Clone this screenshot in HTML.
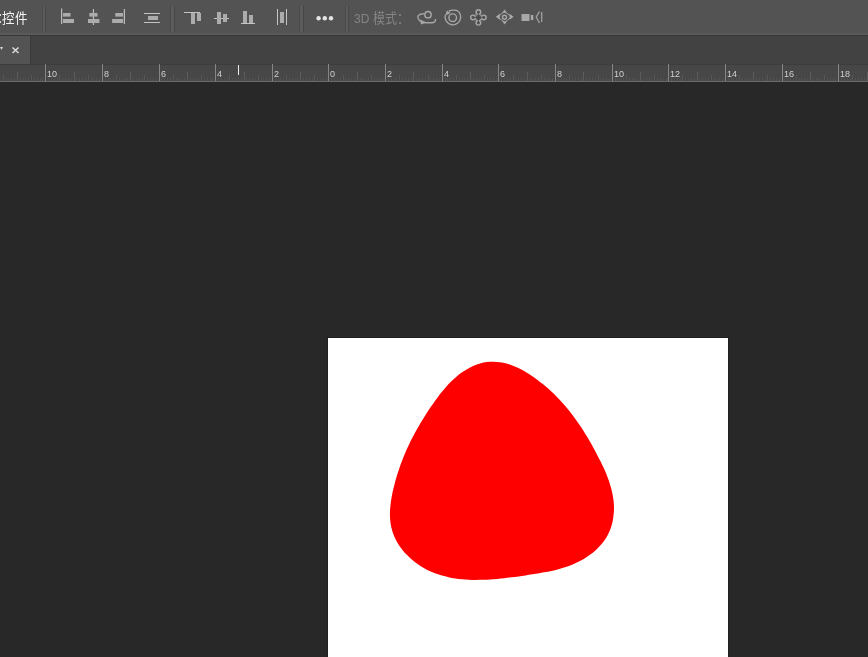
<!DOCTYPE html>
<html lang="zh-CN"><head><meta charset="utf-8">
<style>
html,body{margin:0;padding:0;}
body{width:868px;height:657px;overflow:hidden;background:#282828;position:relative;font-family:"Liberation Sans",sans-serif;}
.abs{position:absolute;}
#opt{left:0;top:0;width:868px;height:33px;background:#535353;}
#optl1{left:0;top:33px;width:868px;height:2px;background:#5a5a5a;}
#optl2{left:0;top:35px;width:868px;height:1px;background:#383838;}
#tabbar{left:0;top:36px;width:868px;height:28px;background:#424242;}
#tab{left:0;top:36px;width:30px;height:28px;background:#535353;}
#tabb{left:30px;top:36px;width:1px;height:28px;background:#3a3a3a;}
#ruler{left:0;top:64px;width:868px;height:17px;background:#474747;border-top:1px solid #3c3c3c;box-sizing:border-box;}
#rulerl{left:0;top:81px;width:868px;height:1px;background:#6a6a6a;}
#canvas{left:328px;top:338px;width:400px;height:330px;background:#fff;box-shadow:0 0 0 1px #202020;}
.t{position:absolute;white-space:nowrap;will-change:transform;}
</style></head>
<body>
<div class="abs" id="opt"></div>
<div class="abs" id="optl1"></div>
<div class="abs" id="optl2"></div>
<div class="abs" id="tabbar"></div>
<div class="abs" id="tab"></div>
<div class="abs" id="tabb"></div>
<div class="abs" id="ruler"></div>
<div class="abs" id="rulerl"></div>
<div class="abs" id="canvas"></div>

<!-- toolbar text -->
<div class="t" style="left:2px;top:10px;font-size:12.5px;color:#f4f4f4;line-height:16px;letter-spacing:-0.3px;font-weight:normal;transform:scale(1,1.1);transform-origin:0 0;">控件</div><div class="abs" style="left:0;top:14px;width:1px;height:2px;background:#d8d8d8"></div><div class="abs" style="left:0;top:21px;width:1px;height:2px;background:#d8d8d8"></div>
<div class="t" style="left:354px;top:9.5px;font-size:12px;color:#858585;line-height:16px;transform:scale(1,1.1);transform-origin:0 0;">3D 模式：</div>

<svg class="abs" style="left:0;top:0" width="868" height="657" viewBox="0 0 868 657">
  <!-- separators -->
  <g>
    <rect x="42" y="6" width="1" height="26" fill="#4a4a4a"/><rect x="43" y="6" width="2" height="26" fill="#5b5b5b"/><rect x="45" y="6" width="1" height="26" fill="#464646"/>
    <rect x="170" y="6" width="1" height="26" fill="#4a4a4a"/><rect x="171" y="6" width="3" height="26" fill="#5b5b5b"/><rect x="174" y="6" width="1" height="26" fill="#464646"/>
    <rect x="299" y="6" width="1" height="26" fill="#4a4a4a"/><rect x="300" y="6" width="3" height="26" fill="#5b5b5b"/><rect x="303" y="6" width="1" height="26" fill="#464646"/>
    <rect x="345" y="6" width="1" height="26" fill="#4a4a4a"/><rect x="346" y="6" width="2" height="26" fill="#5b5b5b"/><rect x="348" y="6" width="1" height="26" fill="#464646"/>
  </g>
  <g fill="#acacac">
    <!-- align left -->
    <rect x="61" y="8.5" width="1.2" height="15.5" fill="#bcbcbc"/>
    <rect x="63" y="13" width="7.5" height="3.6"/><rect x="63" y="19" width="11" height="4"/>
    <!-- align h center -->
    <rect x="92.8" y="9" width="1.2" height="16" fill="#bcbcbc"/>
    <rect x="89.3" y="13" width="8.2" height="3.6"/><rect x="88" y="19" width="11.4" height="4"/>
    <!-- align right -->
    <rect x="123.8" y="9" width="1.2" height="15" fill="#bcbcbc"/>
    <rect x="115.3" y="13" width="7.7" height="3.6"/><rect x="112.1" y="19" width="10.9" height="4"/>
    <!-- distribute -->
    <rect x="144" y="13" width="16" height="1" fill="#c4c4c4"/>
    <rect x="148" y="16" width="10" height="4"/>
    <rect x="144" y="22" width="16" height="1" fill="#c4c4c4"/>
    <!-- align top -->
    <rect x="184" y="12" width="16" height="1" fill="#c4c4c4"/>
    <rect x="191" y="13" width="4" height="11"/><rect x="197" y="13" width="4" height="8"/>
    <!-- align v center -->
    <rect x="214" y="18" width="15" height="1" fill="#c4c4c4"/>
    <rect x="217" y="12" width="4" height="12"/><rect x="223" y="14" width="4" height="8"/>
    <!-- align bottom -->
    <rect x="241" y="23" width="14" height="1" fill="#c4c4c4"/>
    <rect x="243" y="11" width="4" height="12"/><rect x="249" y="15" width="4" height="8"/>
    <!-- distribute h -->
    <rect x="277" y="9" width="1" height="16" fill="#c4c4c4"/>
    <rect x="280" y="12" width="4" height="11"/>
    <rect x="286" y="9" width="1" height="16" fill="#c4c4c4"/>
  </g>
  <!-- dots -->
  <g fill="#e4e4e4">
    <circle cx="318.6" cy="18.2" r="2.2"/><circle cx="324.8" cy="18.2" r="2.2"/><circle cx="331" cy="18.2" r="2.2"/>
  </g>
  <!-- 3D icons -->
  <g fill="none" stroke="#a6a6a6" stroke-width="1.4">
    <circle cx="428" cy="14.7" r="3.2"/>
    <path d="M424.5 13.6 L420.5 14.2 Q417 15.5 418.2 18.5 Q420 22.6 426 22.8 L431.5 22.8 Q436 22.5 435.5 19"/>
    <circle cx="452.7" cy="17.7" r="3.8"/>
    <path d="M449 11 Q452.7 9.5 457 10.5 Q461 12.8 460.6 17.7 A7.8 7.8 0 1 1 445.3 15"/>
    <circle cx="478.4" cy="12" r="2.3"/><circle cx="478.4" cy="22.8" r="2.3"/><circle cx="473" cy="17.4" r="2.3"/><circle cx="483.8" cy="17.4" r="2.3"/>
    <path d="M476 14.6 L476 15 L475.6 15 M480.8 14.6 L480.8 15 L481.2 15 M476 20.2 L476 19.8 L475.6 19.8 M480.8 20.2 L480.8 19.8 L481.2 19.8" />
    <path d="M478.4 12 L478.4 22.8 M473 17.4 L483.8 17.4" stroke="#474747" stroke-width="0.9"/>
    <path d="M504.6 11.5 L511.5 16.8 L504.6 22.5 L497.6 16.8 Z" stroke-width="1"/>
    <circle cx="504.5" cy="17.2" r="2"/>
    <path d="M539.5 11.5 L536.2 17 L539.5 23 M541.7 12 L541.7 22" stroke-width="1.2"/>
  </g>
  <g fill="#a8a8a8">
    <path d="M420 19.5 L426.5 22.5 L421 24.5 Z"/>
    <path d="M445 15.8 L447 10.5 L450.5 13 Z"/>
    <path d="M504.6 9.5 L507 12.8 L502.2 12.8 Z"/>
    <path d="M504.6 24.5 L507 21.2 L502.2 21.2 Z"/>
    <path d="M495.8 16.8 L499.8 13.8 L499.8 19.8 Z"/>
    <path d="M513.6 16.8 L509.6 13.8 L509.6 19.8 Z"/>
    <rect x="521.5" y="14" width="8" height="7"/>
    <rect x="530.8" y="15" width="2.5" height="5"/>
  </g>
  <!-- tab close -->
  <path d="M12.5 47.5 L18.5 53 M18.5 47.5 L12.5 53" stroke="#d8d8d8" stroke-width="1.6"/>
  <path d="M0 47 L3 47 L1.5 50 Z" fill="#d8d8d8"/>

  <!-- blob -->
  <path fill="#ff0000" d="M486.7 362.1 C488.9 361.8 491.1 361.7 493.3 361.7 C495.5 361.7 497.7 361.9 499.9 362.3 C502.1 362.6 504.3 363.1 506.5 363.6 C508.6 364.2 510.8 365.0 512.9 365.8 C515.1 366.6 517.2 367.6 519.3 368.6 C521.4 369.6 523.5 370.7 525.6 371.9 C527.6 373.1 529.6 374.4 531.6 375.7 C533.6 377.0 535.6 378.4 537.5 379.9 C539.4 381.3 541.3 382.8 543.1 384.3 C544.9 385.8 546.7 387.3 548.5 388.8 C550.2 390.4 551.9 392.0 553.6 393.6 C555.2 395.2 556.8 396.8 558.4 398.4 C560.0 400.1 561.5 401.8 563.0 403.5 C564.5 405.2 566.0 406.9 567.5 408.7 C568.9 410.4 570.3 412.2 571.7 414.0 C573.1 415.8 574.4 417.6 575.7 419.5 C577.1 421.3 578.3 423.2 579.6 425.0 C580.9 426.9 582.1 428.8 583.4 430.8 C584.6 432.7 585.8 434.7 587.0 436.6 C588.2 438.6 589.3 440.6 590.5 442.6 C591.6 444.6 592.8 446.7 593.9 448.7 C595.0 450.8 596.1 452.8 597.2 454.9 C598.3 457.0 599.4 459.1 600.5 461.2 C601.5 463.3 602.6 465.5 603.5 467.6 C604.5 469.8 605.5 472.0 606.4 474.2 C607.2 476.3 608.1 478.5 608.9 480.7 C609.6 483.0 610.3 485.2 610.9 487.4 C611.6 489.6 612.1 491.9 612.5 494.1 C613.0 496.4 613.3 498.7 613.6 500.9 C613.8 503.2 614.0 505.5 614.0 507.8 C614.0 510.1 613.9 512.4 613.6 514.6 C613.4 516.9 613.1 519.2 612.6 521.4 C612.1 523.6 611.5 525.8 610.8 528.0 C610.0 530.1 609.1 532.2 608.1 534.2 C607.1 536.2 606.0 538.2 604.7 540.0 C603.4 541.9 602.0 543.6 600.5 545.3 C599.0 547.0 597.4 548.7 595.7 550.2 C594.0 551.7 592.2 553.2 590.3 554.6 C588.5 555.9 586.5 557.2 584.5 558.4 C582.5 559.7 580.5 560.8 578.4 561.8 C576.3 562.9 574.2 563.8 572.1 564.7 C570.0 565.6 567.8 566.4 565.7 567.1 C563.5 567.9 561.3 568.5 559.2 569.1 C557.0 569.7 554.8 570.3 552.6 570.8 C550.4 571.2 548.2 571.7 545.9 572.1 C543.7 572.5 541.5 572.9 539.2 573.3 C536.9 573.6 534.7 574.0 532.4 574.3 C530.1 574.7 527.8 575.0 525.5 575.4 C523.1 575.7 520.8 576.1 518.5 576.4 C516.1 576.7 513.8 577.0 511.4 577.3 C509.0 577.6 506.7 577.9 504.3 578.2 C501.9 578.4 499.6 578.7 497.2 578.9 C494.8 579.1 492.4 579.3 490.1 579.5 C487.7 579.6 485.3 579.7 483.0 579.8 C480.6 579.9 478.2 579.9 475.9 579.9 C473.6 579.9 471.2 579.8 468.9 579.7 C466.6 579.6 464.3 579.5 462.0 579.2 C459.7 579.0 457.4 578.8 455.2 578.4 C452.9 578.1 450.7 577.7 448.5 577.2 C446.3 576.7 444.1 576.2 441.9 575.6 C439.8 574.9 437.7 574.2 435.6 573.5 C433.5 572.7 431.4 571.8 429.4 570.9 C427.3 569.9 425.3 568.9 423.4 567.7 C421.4 566.6 419.5 565.4 417.6 564.0 C415.7 562.7 413.9 561.3 412.1 559.8 C410.4 558.3 408.7 556.8 407.1 555.1 C405.4 553.5 403.9 551.7 402.5 549.9 C401.0 548.1 399.7 546.3 398.5 544.4 C397.3 542.4 396.1 540.4 395.2 538.4 C394.2 536.4 393.3 534.3 392.6 532.1 C391.9 530.0 391.4 527.8 390.9 525.6 C390.5 523.4 390.3 521.1 390.1 518.8 C389.9 516.6 389.9 514.3 390.0 511.9 C390.0 509.6 390.2 507.3 390.5 504.9 C390.7 502.6 391.1 500.2 391.5 497.9 C391.9 495.5 392.4 493.2 392.9 490.8 C393.4 488.5 394.0 486.2 394.6 483.9 C395.2 481.6 395.8 479.4 396.5 477.1 C397.1 474.9 397.8 472.7 398.6 470.5 C399.3 468.3 400.1 466.1 400.8 463.9 C401.6 461.7 402.5 459.6 403.3 457.5 C404.2 455.3 405.1 453.2 406.0 451.1 C406.9 449.0 407.8 447.0 408.8 444.9 C409.8 442.8 410.8 440.8 411.8 438.8 C412.9 436.7 413.9 434.7 415.0 432.7 C416.1 430.7 417.2 428.7 418.4 426.7 C419.5 424.7 420.7 422.8 421.9 420.8 C423.1 418.8 424.3 416.9 425.5 414.9 C426.8 413.0 428.0 411.1 429.3 409.1 C430.6 407.2 431.9 405.3 433.3 403.4 C434.6 401.5 436.0 399.5 437.4 397.7 C438.8 395.8 440.2 393.9 441.7 392.1 C443.2 390.3 444.7 388.5 446.2 386.7 C447.8 385.0 449.4 383.3 451.1 381.6 C452.7 380.0 454.4 378.4 456.2 376.9 C457.9 375.4 459.8 374.0 461.7 372.6 C463.6 371.3 465.5 370.0 467.5 368.9 C469.5 367.8 471.6 366.7 473.7 365.8 C475.8 364.9 478.0 364.1 480.1 363.5 C482.3 362.9 484.5 362.4 486.7 362.1Z"/>

  <!-- ruler -->
  <g id="rt"><rect x="3" y="75" width="1" height="6" fill="#565656"/><rect x="6" y="78" width="1" height="3" fill="#525252"/><rect x="8" y="78" width="1" height="3" fill="#525252"/><rect x="11" y="78" width="1" height="3" fill="#525252"/><rect x="14" y="78" width="1" height="3" fill="#525252"/><rect x="17" y="72" width="1" height="9" fill="#5c5c5c"/><rect x="20" y="78" width="1" height="3" fill="#525252"/><rect x="23" y="78" width="1" height="3" fill="#525252"/><rect x="25" y="78" width="1" height="3" fill="#525252"/><rect x="28" y="78" width="1" height="3" fill="#525252"/><rect x="31" y="75" width="1" height="6" fill="#565656"/><rect x="34" y="78" width="1" height="3" fill="#525252"/><rect x="37" y="78" width="1" height="3" fill="#525252"/><rect x="40" y="78" width="1" height="3" fill="#525252"/><rect x="42" y="78" width="1" height="3" fill="#525252"/><rect x="45" y="64" width="1" height="17" fill="#858585"/><rect x="48" y="78" width="1" height="3" fill="#525252"/><rect x="51" y="78" width="1" height="3" fill="#525252"/><rect x="54" y="78" width="1" height="3" fill="#525252"/><rect x="57" y="78" width="1" height="3" fill="#525252"/><rect x="59" y="75" width="1" height="6" fill="#565656"/><rect x="62" y="78" width="1" height="3" fill="#525252"/><rect x="65" y="78" width="1" height="3" fill="#525252"/><rect x="68" y="78" width="1" height="3" fill="#525252"/><rect x="71" y="78" width="1" height="3" fill="#525252"/><rect x="74" y="72" width="1" height="9" fill="#5c5c5c"/><rect x="76" y="78" width="1" height="3" fill="#525252"/><rect x="79" y="78" width="1" height="3" fill="#525252"/><rect x="82" y="78" width="1" height="3" fill="#525252"/><rect x="85" y="78" width="1" height="3" fill="#525252"/><rect x="88" y="75" width="1" height="6" fill="#565656"/><rect x="91" y="78" width="1" height="3" fill="#525252"/><rect x="93" y="78" width="1" height="3" fill="#525252"/><rect x="96" y="78" width="1" height="3" fill="#525252"/><rect x="99" y="78" width="1" height="3" fill="#525252"/><rect x="102" y="64" width="1" height="17" fill="#858585"/><rect x="105" y="78" width="1" height="3" fill="#525252"/><rect x="108" y="78" width="1" height="3" fill="#525252"/><rect x="110" y="78" width="1" height="3" fill="#525252"/><rect x="113" y="78" width="1" height="3" fill="#525252"/><rect x="116" y="75" width="1" height="6" fill="#565656"/><rect x="119" y="78" width="1" height="3" fill="#525252"/><rect x="122" y="78" width="1" height="3" fill="#525252"/><rect x="125" y="78" width="1" height="3" fill="#525252"/><rect x="127" y="78" width="1" height="3" fill="#525252"/><rect x="130" y="72" width="1" height="9" fill="#5c5c5c"/><rect x="133" y="78" width="1" height="3" fill="#525252"/><rect x="136" y="78" width="1" height="3" fill="#525252"/><rect x="139" y="78" width="1" height="3" fill="#525252"/><rect x="142" y="78" width="1" height="3" fill="#525252"/><rect x="144" y="75" width="1" height="6" fill="#565656"/><rect x="147" y="78" width="1" height="3" fill="#525252"/><rect x="150" y="78" width="1" height="3" fill="#525252"/><rect x="153" y="78" width="1" height="3" fill="#525252"/><rect x="156" y="78" width="1" height="3" fill="#525252"/><rect x="159" y="64" width="1" height="17" fill="#858585"/><rect x="161" y="78" width="1" height="3" fill="#525252"/><rect x="164" y="78" width="1" height="3" fill="#525252"/><rect x="167" y="78" width="1" height="3" fill="#525252"/><rect x="170" y="78" width="1" height="3" fill="#525252"/><rect x="173" y="75" width="1" height="6" fill="#565656"/><rect x="176" y="78" width="1" height="3" fill="#525252"/><rect x="178" y="78" width="1" height="3" fill="#525252"/><rect x="181" y="78" width="1" height="3" fill="#525252"/><rect x="184" y="78" width="1" height="3" fill="#525252"/><rect x="187" y="72" width="1" height="9" fill="#5c5c5c"/><rect x="190" y="78" width="1" height="3" fill="#525252"/><rect x="193" y="78" width="1" height="3" fill="#525252"/><rect x="195" y="78" width="1" height="3" fill="#525252"/><rect x="198" y="78" width="1" height="3" fill="#525252"/><rect x="201" y="75" width="1" height="6" fill="#565656"/><rect x="204" y="78" width="1" height="3" fill="#525252"/><rect x="207" y="78" width="1" height="3" fill="#525252"/><rect x="210" y="78" width="1" height="3" fill="#525252"/><rect x="212" y="78" width="1" height="3" fill="#525252"/><rect x="215" y="64" width="1" height="17" fill="#858585"/><rect x="218" y="78" width="1" height="3" fill="#525252"/><rect x="221" y="78" width="1" height="3" fill="#525252"/><rect x="224" y="78" width="1" height="3" fill="#525252"/><rect x="227" y="78" width="1" height="3" fill="#525252"/><rect x="229" y="75" width="1" height="6" fill="#565656"/><rect x="232" y="78" width="1" height="3" fill="#525252"/><rect x="235" y="78" width="1" height="3" fill="#525252"/><rect x="238" y="78" width="1" height="3" fill="#525252"/><rect x="241" y="78" width="1" height="3" fill="#525252"/><rect x="244" y="72" width="1" height="9" fill="#5c5c5c"/><rect x="246" y="78" width="1" height="3" fill="#525252"/><rect x="249" y="78" width="1" height="3" fill="#525252"/><rect x="252" y="78" width="1" height="3" fill="#525252"/><rect x="255" y="78" width="1" height="3" fill="#525252"/><rect x="258" y="75" width="1" height="6" fill="#565656"/><rect x="261" y="78" width="1" height="3" fill="#525252"/><rect x="263" y="78" width="1" height="3" fill="#525252"/><rect x="266" y="78" width="1" height="3" fill="#525252"/><rect x="269" y="78" width="1" height="3" fill="#525252"/><rect x="272" y="64" width="1" height="17" fill="#858585"/><rect x="275" y="78" width="1" height="3" fill="#525252"/><rect x="278" y="78" width="1" height="3" fill="#525252"/><rect x="280" y="78" width="1" height="3" fill="#525252"/><rect x="283" y="78" width="1" height="3" fill="#525252"/><rect x="286" y="75" width="1" height="6" fill="#565656"/><rect x="289" y="78" width="1" height="3" fill="#525252"/><rect x="292" y="78" width="1" height="3" fill="#525252"/><rect x="295" y="78" width="1" height="3" fill="#525252"/><rect x="297" y="78" width="1" height="3" fill="#525252"/><rect x="300" y="72" width="1" height="9" fill="#5c5c5c"/><rect x="303" y="78" width="1" height="3" fill="#525252"/><rect x="306" y="78" width="1" height="3" fill="#525252"/><rect x="309" y="78" width="1" height="3" fill="#525252"/><rect x="312" y="78" width="1" height="3" fill="#525252"/><rect x="314" y="75" width="1" height="6" fill="#565656"/><rect x="317" y="78" width="1" height="3" fill="#525252"/><rect x="320" y="78" width="1" height="3" fill="#525252"/><rect x="323" y="78" width="1" height="3" fill="#525252"/><rect x="326" y="78" width="1" height="3" fill="#525252"/><rect x="328" y="64" width="1" height="17" fill="#858585"/><rect x="331" y="78" width="1" height="3" fill="#525252"/><rect x="334" y="78" width="1" height="3" fill="#525252"/><rect x="337" y="78" width="1" height="3" fill="#525252"/><rect x="340" y="78" width="1" height="3" fill="#525252"/><rect x="343" y="75" width="1" height="6" fill="#565656"/><rect x="345" y="78" width="1" height="3" fill="#525252"/><rect x="348" y="78" width="1" height="3" fill="#525252"/><rect x="351" y="78" width="1" height="3" fill="#525252"/><rect x="354" y="78" width="1" height="3" fill="#525252"/><rect x="357" y="72" width="1" height="9" fill="#5c5c5c"/><rect x="360" y="78" width="1" height="3" fill="#525252"/><rect x="362" y="78" width="1" height="3" fill="#525252"/><rect x="365" y="78" width="1" height="3" fill="#525252"/><rect x="368" y="78" width="1" height="3" fill="#525252"/><rect x="371" y="75" width="1" height="6" fill="#565656"/><rect x="374" y="78" width="1" height="3" fill="#525252"/><rect x="377" y="78" width="1" height="3" fill="#525252"/><rect x="379" y="78" width="1" height="3" fill="#525252"/><rect x="382" y="78" width="1" height="3" fill="#525252"/><rect x="385" y="64" width="1" height="17" fill="#858585"/><rect x="388" y="78" width="1" height="3" fill="#525252"/><rect x="391" y="78" width="1" height="3" fill="#525252"/><rect x="394" y="78" width="1" height="3" fill="#525252"/><rect x="396" y="78" width="1" height="3" fill="#525252"/><rect x="399" y="75" width="1" height="6" fill="#565656"/><rect x="402" y="78" width="1" height="3" fill="#525252"/><rect x="405" y="78" width="1" height="3" fill="#525252"/><rect x="408" y="78" width="1" height="3" fill="#525252"/><rect x="411" y="78" width="1" height="3" fill="#525252"/><rect x="413" y="72" width="1" height="9" fill="#5c5c5c"/><rect x="416" y="78" width="1" height="3" fill="#525252"/><rect x="419" y="78" width="1" height="3" fill="#525252"/><rect x="422" y="78" width="1" height="3" fill="#525252"/><rect x="425" y="78" width="1" height="3" fill="#525252"/><rect x="428" y="75" width="1" height="6" fill="#565656"/><rect x="430" y="78" width="1" height="3" fill="#525252"/><rect x="433" y="78" width="1" height="3" fill="#525252"/><rect x="436" y="78" width="1" height="3" fill="#525252"/><rect x="439" y="78" width="1" height="3" fill="#525252"/><rect x="442" y="64" width="1" height="17" fill="#858585"/><rect x="445" y="78" width="1" height="3" fill="#525252"/><rect x="447" y="78" width="1" height="3" fill="#525252"/><rect x="450" y="78" width="1" height="3" fill="#525252"/><rect x="453" y="78" width="1" height="3" fill="#525252"/><rect x="456" y="75" width="1" height="6" fill="#565656"/><rect x="459" y="78" width="1" height="3" fill="#525252"/><rect x="462" y="78" width="1" height="3" fill="#525252"/><rect x="464" y="78" width="1" height="3" fill="#525252"/><rect x="467" y="78" width="1" height="3" fill="#525252"/><rect x="470" y="72" width="1" height="9" fill="#5c5c5c"/><rect x="473" y="78" width="1" height="3" fill="#525252"/><rect x="476" y="78" width="1" height="3" fill="#525252"/><rect x="479" y="78" width="1" height="3" fill="#525252"/><rect x="481" y="78" width="1" height="3" fill="#525252"/><rect x="484" y="75" width="1" height="6" fill="#565656"/><rect x="487" y="78" width="1" height="3" fill="#525252"/><rect x="490" y="78" width="1" height="3" fill="#525252"/><rect x="493" y="78" width="1" height="3" fill="#525252"/><rect x="496" y="78" width="1" height="3" fill="#525252"/><rect x="498" y="64" width="1" height="17" fill="#858585"/><rect x="501" y="78" width="1" height="3" fill="#525252"/><rect x="504" y="78" width="1" height="3" fill="#525252"/><rect x="507" y="78" width="1" height="3" fill="#525252"/><rect x="510" y="78" width="1" height="3" fill="#525252"/><rect x="513" y="75" width="1" height="6" fill="#565656"/><rect x="515" y="78" width="1" height="3" fill="#525252"/><rect x="518" y="78" width="1" height="3" fill="#525252"/><rect x="521" y="78" width="1" height="3" fill="#525252"/><rect x="524" y="78" width="1" height="3" fill="#525252"/><rect x="527" y="72" width="1" height="9" fill="#5c5c5c"/><rect x="530" y="78" width="1" height="3" fill="#525252"/><rect x="532" y="78" width="1" height="3" fill="#525252"/><rect x="535" y="78" width="1" height="3" fill="#525252"/><rect x="538" y="78" width="1" height="3" fill="#525252"/><rect x="541" y="75" width="1" height="6" fill="#565656"/><rect x="544" y="78" width="1" height="3" fill="#525252"/><rect x="547" y="78" width="1" height="3" fill="#525252"/><rect x="549" y="78" width="1" height="3" fill="#525252"/><rect x="552" y="78" width="1" height="3" fill="#525252"/><rect x="555" y="64" width="1" height="17" fill="#858585"/><rect x="558" y="78" width="1" height="3" fill="#525252"/><rect x="561" y="78" width="1" height="3" fill="#525252"/><rect x="564" y="78" width="1" height="3" fill="#525252"/><rect x="566" y="78" width="1" height="3" fill="#525252"/><rect x="569" y="75" width="1" height="6" fill="#565656"/><rect x="572" y="78" width="1" height="3" fill="#525252"/><rect x="575" y="78" width="1" height="3" fill="#525252"/><rect x="578" y="78" width="1" height="3" fill="#525252"/><rect x="581" y="78" width="1" height="3" fill="#525252"/><rect x="583" y="72" width="1" height="9" fill="#5c5c5c"/><rect x="586" y="78" width="1" height="3" fill="#525252"/><rect x="589" y="78" width="1" height="3" fill="#525252"/><rect x="592" y="78" width="1" height="3" fill="#525252"/><rect x="595" y="78" width="1" height="3" fill="#525252"/><rect x="598" y="75" width="1" height="6" fill="#565656"/><rect x="600" y="78" width="1" height="3" fill="#525252"/><rect x="603" y="78" width="1" height="3" fill="#525252"/><rect x="606" y="78" width="1" height="3" fill="#525252"/><rect x="609" y="78" width="1" height="3" fill="#525252"/><rect x="612" y="64" width="1" height="17" fill="#858585"/><rect x="615" y="78" width="1" height="3" fill="#525252"/><rect x="617" y="78" width="1" height="3" fill="#525252"/><rect x="620" y="78" width="1" height="3" fill="#525252"/><rect x="623" y="78" width="1" height="3" fill="#525252"/><rect x="626" y="75" width="1" height="6" fill="#565656"/><rect x="629" y="78" width="1" height="3" fill="#525252"/><rect x="632" y="78" width="1" height="3" fill="#525252"/><rect x="634" y="78" width="1" height="3" fill="#525252"/><rect x="637" y="78" width="1" height="3" fill="#525252"/><rect x="640" y="72" width="1" height="9" fill="#5c5c5c"/><rect x="643" y="78" width="1" height="3" fill="#525252"/><rect x="646" y="78" width="1" height="3" fill="#525252"/><rect x="649" y="78" width="1" height="3" fill="#525252"/><rect x="651" y="78" width="1" height="3" fill="#525252"/><rect x="654" y="75" width="1" height="6" fill="#565656"/><rect x="657" y="78" width="1" height="3" fill="#525252"/><rect x="660" y="78" width="1" height="3" fill="#525252"/><rect x="663" y="78" width="1" height="3" fill="#525252"/><rect x="666" y="78" width="1" height="3" fill="#525252"/><rect x="668" y="64" width="1" height="17" fill="#858585"/><rect x="671" y="78" width="1" height="3" fill="#525252"/><rect x="674" y="78" width="1" height="3" fill="#525252"/><rect x="677" y="78" width="1" height="3" fill="#525252"/><rect x="680" y="78" width="1" height="3" fill="#525252"/><rect x="682" y="75" width="1" height="6" fill="#565656"/><rect x="685" y="78" width="1" height="3" fill="#525252"/><rect x="688" y="78" width="1" height="3" fill="#525252"/><rect x="691" y="78" width="1" height="3" fill="#525252"/><rect x="694" y="78" width="1" height="3" fill="#525252"/><rect x="697" y="72" width="1" height="9" fill="#5c5c5c"/><rect x="699" y="78" width="1" height="3" fill="#525252"/><rect x="702" y="78" width="1" height="3" fill="#525252"/><rect x="705" y="78" width="1" height="3" fill="#525252"/><rect x="708" y="78" width="1" height="3" fill="#525252"/><rect x="711" y="75" width="1" height="6" fill="#565656"/><rect x="714" y="78" width="1" height="3" fill="#525252"/><rect x="716" y="78" width="1" height="3" fill="#525252"/><rect x="719" y="78" width="1" height="3" fill="#525252"/><rect x="722" y="78" width="1" height="3" fill="#525252"/><rect x="725" y="64" width="1" height="17" fill="#858585"/><rect x="728" y="78" width="1" height="3" fill="#525252"/><rect x="731" y="78" width="1" height="3" fill="#525252"/><rect x="733" y="78" width="1" height="3" fill="#525252"/><rect x="736" y="78" width="1" height="3" fill="#525252"/><rect x="739" y="75" width="1" height="6" fill="#565656"/><rect x="742" y="78" width="1" height="3" fill="#525252"/><rect x="745" y="78" width="1" height="3" fill="#525252"/><rect x="748" y="78" width="1" height="3" fill="#525252"/><rect x="750" y="78" width="1" height="3" fill="#525252"/><rect x="753" y="72" width="1" height="9" fill="#5c5c5c"/><rect x="756" y="78" width="1" height="3" fill="#525252"/><rect x="759" y="78" width="1" height="3" fill="#525252"/><rect x="762" y="78" width="1" height="3" fill="#525252"/><rect x="765" y="78" width="1" height="3" fill="#525252"/><rect x="767" y="75" width="1" height="6" fill="#565656"/><rect x="770" y="78" width="1" height="3" fill="#525252"/><rect x="773" y="78" width="1" height="3" fill="#525252"/><rect x="776" y="78" width="1" height="3" fill="#525252"/><rect x="779" y="78" width="1" height="3" fill="#525252"/><rect x="782" y="64" width="1" height="17" fill="#858585"/><rect x="784" y="78" width="1" height="3" fill="#525252"/><rect x="787" y="78" width="1" height="3" fill="#525252"/><rect x="790" y="78" width="1" height="3" fill="#525252"/><rect x="793" y="78" width="1" height="3" fill="#525252"/><rect x="796" y="75" width="1" height="6" fill="#565656"/><rect x="799" y="78" width="1" height="3" fill="#525252"/><rect x="801" y="78" width="1" height="3" fill="#525252"/><rect x="804" y="78" width="1" height="3" fill="#525252"/><rect x="807" y="78" width="1" height="3" fill="#525252"/><rect x="810" y="72" width="1" height="9" fill="#5c5c5c"/><rect x="813" y="78" width="1" height="3" fill="#525252"/><rect x="816" y="78" width="1" height="3" fill="#525252"/><rect x="818" y="78" width="1" height="3" fill="#525252"/><rect x="821" y="78" width="1" height="3" fill="#525252"/><rect x="824" y="75" width="1" height="6" fill="#565656"/><rect x="827" y="78" width="1" height="3" fill="#525252"/><rect x="830" y="78" width="1" height="3" fill="#525252"/><rect x="833" y="78" width="1" height="3" fill="#525252"/><rect x="835" y="78" width="1" height="3" fill="#525252"/><rect x="838" y="64" width="1" height="17" fill="#858585"/><rect x="841" y="78" width="1" height="3" fill="#525252"/><rect x="844" y="78" width="1" height="3" fill="#525252"/><rect x="847" y="78" width="1" height="3" fill="#525252"/><rect x="850" y="78" width="1" height="3" fill="#525252"/><rect x="852" y="75" width="1" height="6" fill="#565656"/><rect x="855" y="78" width="1" height="3" fill="#525252"/><rect x="858" y="78" width="1" height="3" fill="#525252"/><rect x="861" y="78" width="1" height="3" fill="#525252"/><rect x="864" y="78" width="1" height="3" fill="#525252"/><rect x="867" y="72" width="1" height="9" fill="#5c5c5c"/><g font-family="Liberation Sans" font-size="9" fill="#d0d0d0"><text x="47" y="77">10</text><text x="104" y="77">8</text><text x="161" y="77">6</text><text x="217" y="77">4</text><text x="274" y="77">2</text><text x="330" y="77">0</text><text x="387" y="77">2</text><text x="444" y="77">4</text><text x="500" y="77">6</text><text x="557" y="77">8</text><text x="614" y="77">10</text><text x="670" y="77">12</text><text x="727" y="77">14</text><text x="784" y="77">16</text><text x="840" y="77">18</text></g></g>
<rect x="238" y="65" width="1" height="10" fill="#f0f0f0"/>
</svg>
</body></html>
